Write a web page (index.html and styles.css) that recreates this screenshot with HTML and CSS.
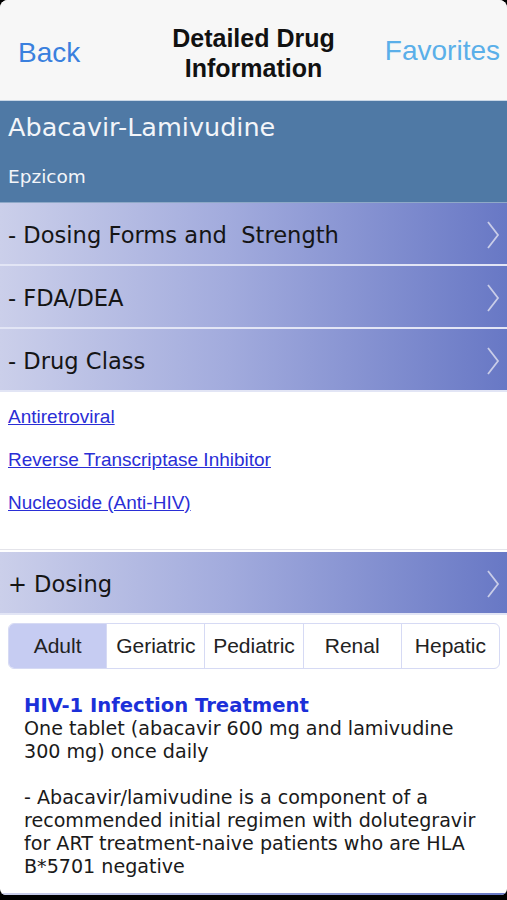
FILE: index.html
```html
<!DOCTYPE html>
<html lang="en">
<head>
  <meta charset="UTF-8" />
  <title>Detailed Drug Information</title>
  <link rel="stylesheet" href="styles.css">
</head>
<body>
  <div class="screen">
    <div class="navbar">
      <span class="nav-back">Back</span>
      <div class="nav-title">Detailed Drug<br>Information</div>
      <span class="nav-fav">Favorites</span>
    </div>

    <div class="drug-head">
      <div class="drug-name">Abacavir-Lamivudine</div>
      <div class="drug-brand">Epzicom</div>
    </div>

    <div class="row"><span class="row-text">- Dosing Forms and&nbsp; Strength</span>
      <svg class="chev" width="14" height="30" viewBox="0 0 14 30"><path d="M2 2 L12 15 L2 28" /></svg></div>
    <div class="row"><span class="row-text">- FDA/DEA</span>
      <svg class="chev" width="14" height="30" viewBox="0 0 14 30"><path d="M2 2 L12 15 L2 28" /></svg></div>
    <div class="row"><span class="row-text">- Drug Class</span>
      <svg class="chev" width="14" height="30" viewBox="0 0 14 30"><path d="M2 2 L12 15 L2 28" /></svg></div>

    <div class="links">
      <div class="link-line"><a href="#">Antiretroviral</a></div>
      <div class="link-line"><a href="#">Reverse Transcriptase Inhibitor</a></div>
      <div class="link-line"><a href="#">Nucleoside (Anti-HIV)</a></div>
    </div>

    <div class="row"><span class="row-text">+ Dosing</span>
      <svg class="chev" width="14" height="30" viewBox="0 0 14 30"><path d="M2 2 L12 15 L2 28" /></svg></div>

    <div class="segments">
      <div class="seg active">Adult</div>
      <div class="seg">Geriatric</div>
      <div class="seg">Pediatric</div>
      <div class="seg">Renal</div>
      <div class="seg">Hepatic</div>
    </div>

    <div class="dose">
      <div class="dose-title">HIV-1 Infection Treatment</div>
      <div>One tablet (abacavir 600 mg and lamivudine 300 mg) once daily</div>
      <br>
      <div>- Abacavir/lamivudine is a component of a recommended initial regimen with dolutegravir for ART treatment-naive patients who are HLA B*5701 negative</div>
    </div>

    <div class="row"></div>
  </div>
</body>
</html>
```

FILE: styles.css
```css
body { margin: 0; background: #000; }
.screen {
  height: 895px;
  overflow: hidden;
  background: #fff;
  border-radius: 8px 8px 6px 6px;
}

/* top bar */
.navbar {
  height: 100px;
  display: grid;
  grid-template-columns: 1fr auto 1fr;
  align-items: center;
  background: #f7f7f7;
  border-bottom: 1px solid #c9d7e6;
  font-family: "Liberation Sans", Arial, sans-serif;
}
.nav-back { font-size: 28px; color: #3a80de; padding-left: 18px; padding-top: 6px; }
.nav-title {
  font-size: 25px;
  font-weight: bold;
  line-height: 30px;
  text-align: center;
  color: #111;
  padding-top: 6px;
}
.nav-fav { font-size: 28px; color: #5aafe9; justify-self: end; padding-right: 7px; padding-top: 2px; }

/* drug header */
.drug-head {
  background: #4f79a5;
  color: #f3f5f9;
  font-family: "DejaVu Sans", Verdana, sans-serif;
  padding: 11px 8px 13px;
  border-bottom: 1px solid #8fa9c8;
}
.drug-name { font-size: 25.5px; line-height: 30px; margin-bottom: 23px; }
.drug-brand { font-size: 18.5px; line-height: 24px; }

/* section rows */
.row {
  height: 59px;
  display: flex;
  align-items: center;
  justify-content: space-between;
  padding: 2px 7px 0 8px;
  background: linear-gradient(to right, #cbcfea, #a2abdd 45%, #6878c5);
  border-bottom: 2px solid #e2e5f5;
  font-family: "DejaVu Sans", Verdana, sans-serif;
  font-size: 22.6px;
  color: #151515;
}
.chev path { fill: none; stroke: #c9cde8; stroke-width: 1.8; }

/* drug class links */
.links {
  padding: 3px 8px 25px;
  border-bottom: 1px solid #e4e4ea;
  margin-bottom: 2px;
  font-family: "Liberation Sans", Arial, sans-serif;
  font-size: 19px;
}
.link-line { height: 43px; line-height: 43px; }
.links a { color: #2a2ed6; }

/* age tabs */
.segments {
  display: flex;
  margin: 8px 7px 0 8px;
  border: 1px solid #d6daf4;
  border-radius: 6px;
  overflow: hidden;
  font-family: "Liberation Sans", Arial, sans-serif;
  font-size: 21px;
  color: #222;
}
.seg {
  flex: 1;
  height: 44px;
  line-height: 44px;
  text-align: center;
  border-left: 1px solid #d6daf4;
}
.seg:first-child { border-left: none; }
.seg.active { background: #c6ccf2; }

/* dosing text */
.dose {
  padding: 25px 24px 15px;
  font-family: "DejaVu Sans", Verdana, sans-serif;
  font-size: 19.1px;
  line-height: 23px;
  color: #1a1a1a;
}
.dose-title { font-weight: bold; color: #1b30d9; font-size: 19.6px; }
```
